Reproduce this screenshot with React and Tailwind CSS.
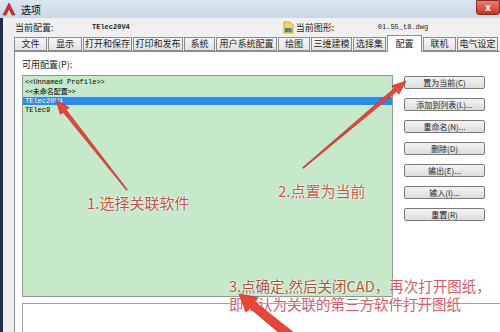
import React from 'react';

const tabs = [
  ['文件', 33], ['显示', 34], ['打开和保存', 49], ['打印和发布', 50], ['系统', 31],
  ['用户系统配置', 61], ['绘图', 32], ['三维建模', 41], ['选择集', 33], ['配置', 35],
  ['联机', 33], ['电气设定', 41],
];

const buttons = ['置为当前(C)', '添加到列表(L)...', '重命名(N)...', '删除(D)', '输出(E)...', '输入(I)...', '重置(R)'];

// polygon for a tapered arrow from tail to tip
function arrowPoints(x1, y1, x2, y2, w0, w1, hl, hw) {
  const len = Math.hypot(x2 - x1, y2 - y1);
  const dx = (x2 - x1) / len, dy = (y2 - y1) / len;
  const nx = -dy, ny = dx;
  const bx = x2 - dx * hl, by = y2 - dy * hl;
  const p = [
    [x1 + nx * w0 / 2, y1 + ny * w0 / 2],
    [bx + nx * w1 / 2, by + ny * w1 / 2],
    [bx + nx * hw / 2, by + ny * hw / 2],
    [x2, y2],
    [bx - nx * hw / 2, by - ny * hw / 2],
    [bx - nx * w1 / 2, by - ny * w1 / 2],
    [x1 - nx * w0 / 2, y1 - ny * w0 / 2],
  ];
  return p.map(([a, b]) => `${a.toFixed(1)},${b.toFixed(1)}`).join(' ');
}

const cjk = { fontFamily: '"SimSun","Noto Sans CJK SC",sans-serif' };
const mono = { fontFamily: '"Liberation Mono","Courier New",monospace' };
const note = { fontFamily: '"Noto Sans CJK SC","Microsoft YaHei",sans-serif', textShadow: '0 0 2px #fff, 0 0 2px #fff' };

export default function App() {
  return (
    <div className="relative w-[500px] h-[332px] overflow-hidden bg-[#f0f0f0] text-[9px] text-[#222]" style={cjk}>
      {/* title bar */}
      <div className="h-[18px] flex items-center bg-gradient-to-b from-[#dbe5f1] to-[#c9d7e8]">
        <svg width="14" height="14" viewBox="0 0 14 14" className="ml-[2px]">
          <path d="M7 1 L13 13 L10 13 L7 6.5 L4 13 L1 13 Z" fill="#d9282a" stroke="#8a1010" strokeWidth="0.6" />
        </svg>
        <span className="ml-[5px] text-[10px] text-black">选项</span>
        <div className="flex-1" />
        <div className="self-start w-[24px] h-[15px] rounded-b-[3px] bg-gradient-to-b from-[#e88070] to-[#c4301e] border border-[#8a2a20] flex items-center justify-center text-white text-[10px] font-bold" style={{ fontFamily: 'Arial, sans-serif' }}>x</div>
      </div>

      <div className="flex h-[314px]">
        <div className="w-[3px] bg-[#1d2b4a]" />
        <div className="w-[11px] bg-[#eeeeee]" />
        <div className="flex-1 flex flex-col">
          {/* current profile row */}
          <div className="h-[19px] flex items-center">
            <span className="ml-[1px] w-[77px]">当前配置:</span>
            <span className="text-[7px] font-bold" style={mono}>TElec20V4</span>
            <div className="w-[153px]" />
            <svg width="11" height="13" viewBox="0 0 11 13">
              <path d="M1 1 H7 L10 4 V12 H1 Z" fill="#f6d64a" stroke="#9a7a20" strokeWidth="0.6" />
              <rect x="2" y="7" width="6" height="4" fill="#3a7ac8" />
              <rect x="5" y="8" width="4" height="3" fill="#5aa040" />
            </svg>
            <span className="ml-[2px] w-[82px]">当前图形:</span>
            <span className="text-[7px]" style={mono}>01.S5_t8.dwg</span>
          </div>

          {/* tabs */}
          <div className="h-[14px] flex items-end relative z-10">
            {tabs.map(([t, w]) => {
              const active = t === '配置';
              return (
                <div
                  key={t}
                  style={{ width: w }}
                  className={
                    'mr-px flex items-center justify-center border border-[#8c8c8c] ' +
                    (active
                      ? 'h-[17px] bg-white border-b-0 -mb-px'
                      : 'h-[14px] bg-gradient-to-b from-[#f6f6f6] to-[#e3e3e3]')
                  }
                >
                  {t}
                </div>
              );
            })}
          </div>

          {/* tab page */}
          <div className="flex-1 bg-white border-t border-l border-[#8c8c8c] pl-[7px] pt-[8px] flex flex-col">
            <div className="h-[10px] leading-[10px]">可用配置(P):</div>
            <div className="flex mt-[5px]">
              <div className="w-[371px] h-[222px] bg-[#c6e9c9] border border-[#8e9a90] pt-[2px] text-[7px] leading-[8.7px] text-black" style={mono}>
                <div className="pl-[2px]">{'<<Unnamed Profile>>'}</div>
                <div className="pl-[2px]" style={cjk}>{'<<未命名配置>>'}</div>
                <div className="h-[2px] bg-[#b4e4f4]" />
                <div className="pl-[2px] bg-[#2f8ce6] text-white h-[8px] leading-[8px]">TElec20V4</div>
                <div className="pl-[2px] mt-[1px]">TElec9</div>
              </div>
              <div className="ml-[11px] pt-[1px] flex flex-col gap-[9px]">
                {buttons.map(b => (
                  <div key={b} className="w-[81px] h-[13px] rounded-[2px] border border-[#7a7a7a] bg-gradient-to-b from-[#f4f4f4] to-[#dcdcdc] flex items-center justify-center text-[8px]">
                    {b}
                  </div>
                ))}
              </div>
            </div>
            <div className="mt-[6px] flex-1 border-t border-l border-[#a0a0a0] bg-white" />
          </div>
        </div>
      </div>

      {/* annotations */}
      <svg className="absolute left-0 top-0" width="500" height="332">
        <g fill="#e8443a" stroke="#a82a24" strokeWidth="0.6" strokeLinejoin="round">
          <polygon points={arrowPoints(127, 190, 56, 100, 1, 4, 14, 11)} />
          <polygon points={arrowPoints(303, 168, 406, 81, 1, 4, 14, 11)} />
        </g>
      </svg>
      <div className="absolute left-[87px] top-[193px] text-[15px] leading-[20px] text-[#b9544a]" style={note}>1.选择关联软件</div>
      <div className="absolute left-[278px] top-[181px] text-[15px] leading-[20px] text-[#c25c4a]" style={note}>2.点置为当前</div>
      <div className="absolute left-[229px] top-[277px] text-[14.5px] leading-[18px] whitespace-nowrap" style={note}>
        <div>
          <span className="text-[#a8563a]">3.点确定,然后关闭CAD，</span>
          <span className="text-[#d35a6a]">再次打开图纸，</span>
        </div>
        <div className="text-[#d0606e]">即默认为关联的第三方软件打开图纸</div>
      </div>
      <svg className="absolute left-0 top-0" width="500" height="332">
        <polygon points={arrowPoints(305, 348, 239, 294, 10, 8, 17, 19)} fill="#e8443a" stroke="#a82a24" strokeWidth="0.6" />
      </svg>
    </div>
  );
}
